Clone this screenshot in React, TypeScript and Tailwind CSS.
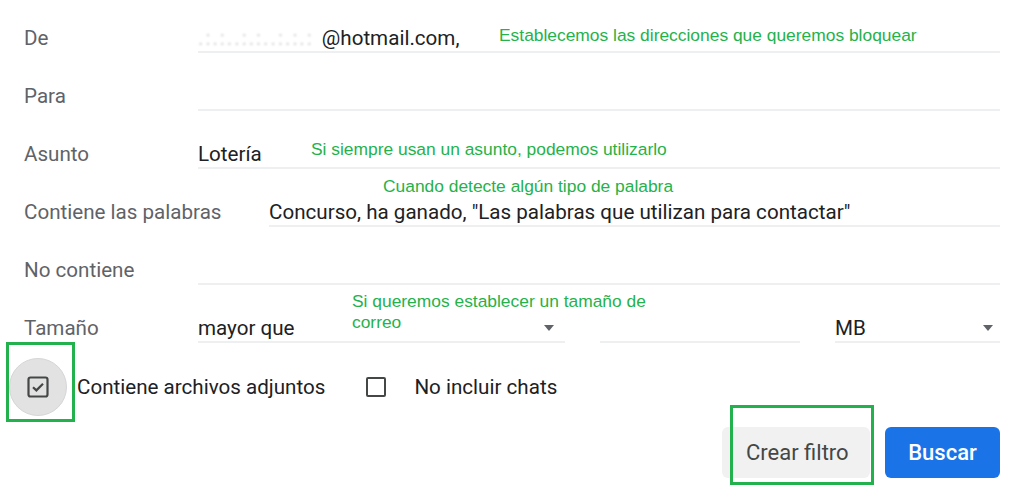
const note = "absolute text-[17.4px] leading-[21px] font-['Liberation_Sans',Arial,sans-serif] text-[#25b24b]"

function Caret() {
  return (
    <svg width="12" height="6" viewBox="0 0 12 6" className="shrink-0">
      <path d="M1 0 L11 0 L6 6 Z" fill="#5f6368" />
    </svg>
  )
}

function Row({ label, labelW, children, first }: { label: string; labelW: string; children?: React.ReactNode; first?: boolean }) {
  return (
    <div className={`flex items-end ${first ? 'h-[52px]' : 'h-[58px]'}`}>
      <div className={`${labelW} shrink-0 pb-[2px] leading-[26px] text-[20.6px] text-[#5f6368]`}>{label}</div>
      <div className="flex-1 h-[40px] border-b-2 border-[#eeeff1] flex items-end leading-[26px] text-[20.6px] text-[#202124]">
        {children}
      </div>
    </div>
  )
}

export default function App() {
  return (
    <div className="relative w-[1024px] h-[504px] bg-white overflow-hidden font-['Roboto',sans-serif]">
      <div className="px-6 mt-[1px]">
        <Row label="De" labelW="w-[174px]" first>
          <span className="blur-[1.2px] text-[#d2d2d2] tracking-[2px] mr-[8px]">.:.:..:.:..:.:.:</span>
          <span>@hotmail.com,</span>
        </Row>
        <Row label="Para" labelW="w-[174px]" />
        <Row label="Asunto" labelW="w-[174px]">
          <span>Lotería</span>
        </Row>
        <Row label="Contiene las palabras" labelW="w-[245px]">
          <span>Concurso, ha ganado, "Las palabras que utilizan para contactar"</span>
        </Row>
        <Row label="No contiene" labelW="w-[174px]" />

        {/* Tamaño */}
        <div className="flex items-end h-[58px]">
          <div className="w-[174px] shrink-0 pb-[2px] leading-[26px] text-[20.6px] text-[#5f6368]">Tamaño</div>
          <div className="w-[367px] h-[40px] border-b-2 border-[#eeeff1] flex items-end justify-between pr-[10px] leading-[26px] text-[20.6px] text-[#202124]">
            <span>mayor que</span>
            <span className="mb-[10px]"><Caret /></span>
          </div>
          <div className="w-[35px]" />
          <div className="w-[200px] h-[40px] border-b-2 border-[#eeeff1]" />
          <div className="w-[35px]" />
          <div className="flex-1 h-[40px] border-b-2 border-[#eeeff1] flex items-end justify-between pr-[6px] leading-[26px] text-[20.6px] text-[#202124]">
            <span>MB</span>
            <span className="mb-[10px]"><Caret /></span>
          </div>
        </div>
      </div>

      {/* checkboxes */}
      <div className="flex items-center h-[88px] pl-[9px]">
        <div className="w-[58px] h-[58px] rounded-full bg-[#e2e2e3] border border-[#d6d6d8] flex items-center justify-center">
          <svg width="24" height="24" viewBox="0 0 24 24">
            <rect x="2.5" y="2.5" width="19" height="19" rx="2" fill="none" stroke="#444746" strokeWidth="2.2" />
            <path d="M7 12.2 L10.4 15.4 L17 8.8" fill="none" stroke="#444746" strokeWidth="2.2" />
          </svg>
        </div>
        <span className="ml-[10px] text-[20.6px] text-[#202124]">Contiene archivos adjuntos</span>
        <div className="ml-[40px] w-[22px] h-[22px] flex items-center justify-center">
          <div className="w-[20px] h-[20px] rounded-[2px] border-2 border-[#444746]" />
        </div>
        <span className="ml-[27px] text-[20.6px] text-[#202124]">No incluir chats</span>
      </div>

      {/* buttons */}
      <div className="flex justify-end gap-[15px] pr-6 -mt-[4px]">
        <button className="w-[148px] h-[51px] rounded-[6px] bg-[#f1f1f1] text-[22px] text-[#444746] text-left pl-[24px]">
          Crear filtro
        </button>
        <button className="w-[115px] h-[51px] rounded-[6px] bg-[#1b73e8] text-[22px] font-medium text-white">
          Buscar
        </button>
      </div>

      {/* green highlight boxes */}
      <div className="absolute left-[6px] top-[342px] w-[69px] h-[80px] border-[3px] border-[#22b14c]" />
      <div className="absolute left-[730px] top-[405px] w-[144px] h-[80px] border-[3px] border-[#22b14c]" />

      {/* annotations */}
      <div className={`${note} left-[499px] top-[25px]`}>
        Establecemos las direcciones que queremos bloquear
      </div>
      <div className={`${note} left-[311px] top-[139px]`}>
        Si siempre usan un asunto, podemos utilizarlo
      </div>
      <div className={`${note} left-[383px] top-[176px]`}>
        Cuando detecte algún tipo de palabra
      </div>
      <div className={`${note} left-[352px] top-[291px] w-[310px]`}>
        Si queremos establecer un tamaño de correo
      </div>
    </div>
  )
}
